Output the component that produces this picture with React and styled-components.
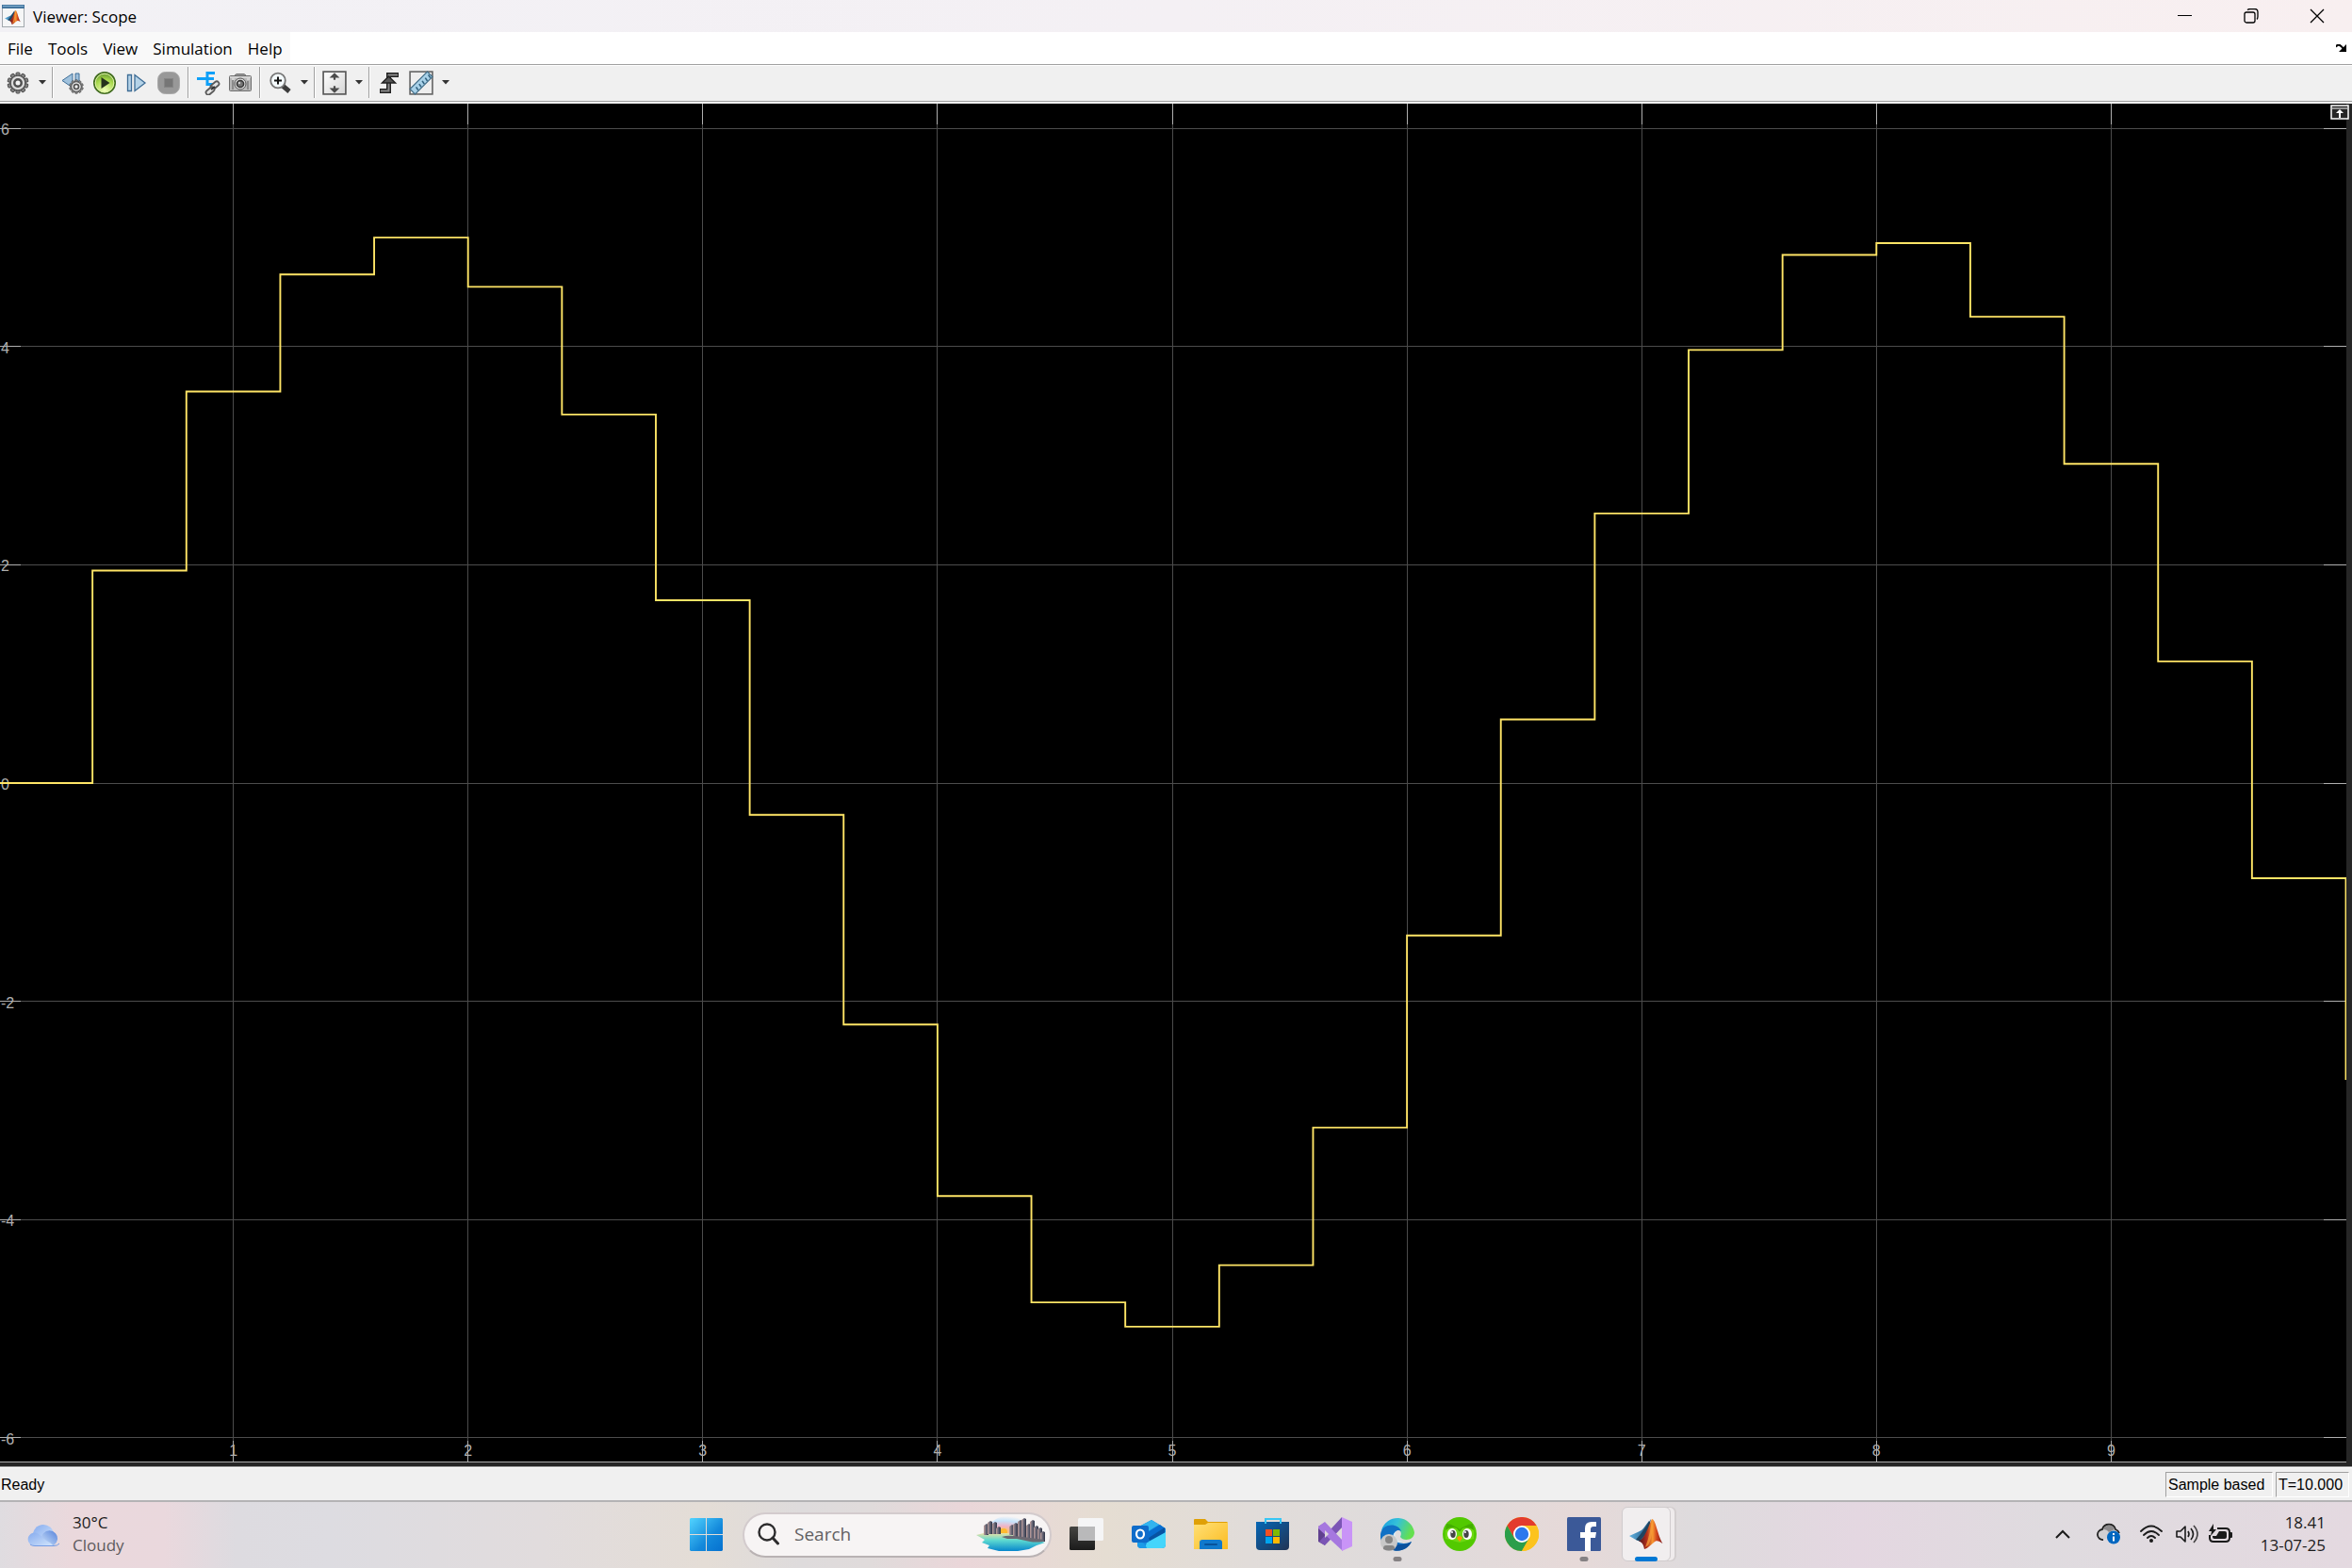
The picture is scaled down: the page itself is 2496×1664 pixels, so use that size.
import React, { useLayoutEffect, useRef, useState } from "react";
import styled, { createGlobalStyle } from "styled-components";

const Global = createGlobalStyle`
  * { box-sizing: border-box; }
  body { margin: 0; font-family: "Open Sans", "Noto Sans", sans-serif; font-size: 17px; color: #000; }
  button, input { font: inherit; color: inherit; margin: 0; }
  button { border: 0; padding: 0; background: none; display: flex; align-items: center; justify-content: center; }
  svg { display: block; flex: none; }
`;

const Desktop = styled.div`
  display: flex;
  flex-direction: column;
  height: 100vh;
  overflow: hidden;
`;

const TitleBar = styled.header`
  display: flex;
  align-items: center;
  height: 34px;
  padding: 0 2px;
  background: linear-gradient(90deg, #f2f1f5, #f4f0f4 50%, #f8eff0);
`;
const Title = styled.h1`
  flex: 1;
  margin: 0 0 0 9px;
  font-size: 17px;
  line-height: 24px;
  font-weight: 400;
  padding-top: 2px;
`;
const WindowButton = styled.button`
  width: 70px;
  height: 34px;
`;

const MenuBar = styled.nav`
  display: flex;
  justify-content: space-between;
  align-items: center;
  height: 34px;
  padding-right: 6px;
  background: #fff;
`;
const MenuList = styled.div`
  display: flex;
  gap: 16px;
  height: 34px;
  padding: 0 8px;
  background: #f9f9f9;
`;
const MenuItem = styled.button`
  line-height: 24px;
  padding-top: 2px;
`;

const ToolBar = styled.div`
  display: flex;
  align-items: center;
  height: 42px;
  padding: 0 2px 4px;
  border-top: 1px solid #a0a0a0;
  background: linear-gradient(#fff 1px, #f0f0f0 1px, #f0f0f0 38px, #a0a0a0 38px, #a0a0a0 39px, #f0f0f0 39px);
`;
const ToolButton = styled.button`
  width: 34px;
  height: 34px;
`;
const DropButton = styled.button`
  width: 16px;
  height: 34px;
  padding-left: 2px;
`;
const Separator = styled.span`
  width: 2px;
  height: 33px;
  margin: 0 3px;
  border-left: 1px solid #a0a0a0;
  border-right: 1px solid #fff;
`;

const Plot = styled.main`
  position: relative;
  flex: 1;
  min-height: 0;
  overflow: hidden;
  background: #262626;
  padding: 0 6px 4px 0;
`;
const PlotArea = styled.div`
  height: 100%;
  background: #000;
  border-bottom: 1px solid #afafaf;
  overflow: hidden;
`;
const CornerButton = styled.button`
  position: absolute;
  top: 1px;
  right: 3px;
  width: 20px;
  height: 16px;
`;

const StatusBar = styled.footer`
  display: flex;
  align-items: center;
  gap: 3px;
  height: 36px;
  padding: 2px 3px 0 1px;
  border-top: 1px solid #a0a0a0;
  background: linear-gradient(#fff 1px, #f0f0f0 1px);
  font: 16px/20px "Liberation Sans", Arial, sans-serif;
`;
const Ready = styled.span`
  flex: 1;
`;
const StatusCell = styled.span`
  height: 27px;
  width: ${(p) => p.$width}px;
  padding: 3px 2px;
  border: 1px solid;
  border-color: #a0a0a0 #fff #fff #a0a0a0;
  white-space: nowrap;
`;

const TaskBar = styled.footer`
  display: grid;
  grid-template-columns: 1fr auto 1fr;
  align-items: center;
  height: 72px;
  border-top: 2px solid #b4b3b5;
  background: linear-gradient(90deg, #dfdce0 0%, #ead8dc 3%, #ead8dd 7%, #dddbe0 10%, #dddce1 14%, #e1dcdd 23%, #e4ddd6 30%, #dedbdc 34%, #e0dbdb 37%, #ead6d9 41%, #e5ddd2 47%, #e1dcd9 53%, #dfdbdc 60%, #e6d9d8 67%, #dedbdd 72%, #e4d7e1 79%, #dfdbdf 87%, #e4d9e0 100%);
`;
const Weather = styled.button`
  justify-self: start;
  gap: 12px;
  padding-left: 29px;
  text-align: left;
  line-height: 24px;
`;
const WeatherText = styled.span`
  display: flex;
  flex-direction: column;
  padding-bottom: 2px;
  color: #1b1b1b;
`;
const Muted = styled.span`
  color: #5d5a5d;
`;
const TaskCenter = styled.div`
  display: flex;
  align-items: center;
`;
const TaskButton = styled.button`
  position: relative;
  width: 66px;
  height: 70px;
  padding-bottom: 2px;
  &::after {
    content: "";
    display: ${(p) => (p.$mark ? "block" : "none")};
    position: absolute;
    bottom: 7px;
    left: 50%;
    width: ${(p) => (p.$mark === "active" ? 24 : 9)}px;
    height: 5px;
    transform: translateX(-50%);
    border-radius: 3px;
    background: ${(p) => (p.$mark === "active" ? "#0078d4" : "#858183")};
  }
`;
const ActiveTile = styled.span`
  display: flex;
  align-items: center;
  justify-content: center;
  width: 52px;
  height: 58px;
  border: 1px solid #d0cbcd;
  border-radius: 6px;
  background: #f1eeef;
  box-shadow: 5px 0 0 -1px #efebec, 6px 0 0 0 #d3cecf;
`;
const SearchBox = styled.label`
  display: flex;
  align-items: center;
  width: 328px;
  height: 48px;
  margin: 0 4px 0 6px;
  padding: 0 4px 2px 14px;
  border: 2px solid #d3cbcd;
  border-bottom-color: #b9b2b3;
  border-radius: 24px;
  background: #f7f4f4;
`;
const SearchInput = styled.input`
  flex: 1;
  min-width: 0;
  margin-left: 15px;
  padding: 0;
  border: 0;
  outline: 0;
  background: transparent;
  font-size: 19px;
  line-height: 28px;
  &::placeholder { color: #626062; opacity: 1; }
`;
const Tray = styled.div`
  display: flex;
  align-items: center;
  justify-self: end;
  padding-right: 28px;
`;
const TrayButton = styled.button`
  width: ${(p) => p.$width || 36}px;
  height: 60px;
  padding-bottom: 2px;
`;
const Clock = styled.button`
  width: 93px;
  flex-direction: column;
  align-items: flex-end;
  line-height: 24px;
  padding-bottom: 2px;
  color: #1b1b1b;
`;

const AXIS_LIMIT = 6.225;
const STEP = 0.4;
const samples = Array.from({ length: 26 }, (_, i) => ({ t: i * STEP, v: 5 * Math.sin(i * STEP) }));

function ScopeChart() {
  const ref = useRef(null);
  const [size, setSize] = useState({ w: 2490, h: 1441 });
  useLayoutEffect(() => {
    const measure = () => {
      const box = ref.current.getBoundingClientRect();
      setSize({ w: box.width, h: box.height });
    };
    measure();
    const observer = new ResizeObserver(measure);
    observer.observe(ref.current);
    return () => observer.disconnect();
  }, []);
  const { w, h } = size;
  const x = (t) => (t * (w + 1)) / 10 - 1.5;
  const y = (v) => h * (0.5 - v / (2 * AXIS_LIMIT));
  const path = samples
    .map((s, i) => (i ? `H${x(s.t)}V${y(s.v)}` : `M${x(0)} ${y(0)}`))
    .join("");
  const times = [1, 2, 3, 4, 5, 6, 7, 8, 9];
  const values = [6, 4, 2, 0, -2, -4, -6];
  return (
    <PlotArea ref={ref}>
      <svg width={w} height={h} role="img" aria-label="Sampled sine wave">
        <g shapeRendering="crispEdges">
          {times.map((t) => (
            <g key={t}>
              <line x1={x(t)} x2={x(t)} y1="0" y2={h} stroke="#4c4c4c" />
              <line x1={x(t)} x2={x(t)} y1="0" y2="22" stroke="#afafaf" />
              <line x1={x(t)} x2={x(t)} y1={h - 23} y2={h} stroke="#afafaf" />
            </g>
          ))}
          {values.map((v) => (
            <g key={v}>
              <line x1="0" x2={w} y1={y(v)} y2={y(v)} stroke="#4c4c4c" />
              <line x1="0" x2="22" y1={y(v)} y2={y(v)} stroke="#afafaf" />
              <line x1={w - 24} x2={w} y1={y(v)} y2={y(v)} stroke="#afafaf" />
            </g>
          ))}
        </g>
        <g fill="#afafaf" fontFamily="Liberation Sans, Arial, sans-serif" fontSize="16">
          {times.map((t) => (
            <text key={t} x={x(t)} y={h - 7} textAnchor="middle">{t}</text>
          ))}
          {values.map((v) => (
            <text key={v} x="1" y={y(v) + 7}>{v}</text>
          ))}
        </g>
        <path d={path} fill="none" stroke="#ffe566" strokeWidth="1.9" />
      </svg>
    </PlotArea>
  );
}

function MatlabIcon({ size }) {
  return (
    <svg width={size} height={size} viewBox="0 0 36 36">
      <defs>
        <linearGradient id="mlBlue" x1="0" x2="1"><stop offset="0" stopColor="#63b3e0" /><stop offset="1" stopColor="#174a77" /></linearGradient>
        <linearGradient id="mlFire" x1="0" x2="1"><stop offset="0" stopColor="#4a1320" /><stop offset=".35" stopColor="#b4301b" /><stop offset=".58" stopColor="#f89a32" /><stop offset=".75" stopColor="#d2451e" /><stop offset="1" stopColor="#7b1415" /></linearGradient>
      </defs>
      <path d="M0 20 10 15.500q3-1 5-3.500L21 4l2 4-6 13-6 4.500-4-1.500z" fill="url(#mlBlue)" />
      <path d="m7 24 5-6 6-8 5-8-3 13-9 10.500z" fill="#20445f" />
      <path d="M24 2c4 0 6 17 11.500 26-4-3-7-4-9.500-1-4 3-6 6-10 7-1-5-2-7-6-8.500 6-2 10-15 14-23.500z" fill="url(#mlFire)" />
      <path d="M24 2c-1 9-3 20-7 30l3-2c4-8 6-18 4-28z" fill="#f9a33b" opacity=".7" />
    </svg>
  );
}

const WindowIcon = () => (
  <svg width="24" height="24" viewBox="0 0 24 24">
    <rect x=".5" y=".5" width="23" height="23" fill="#f5f6f7" stroke="#a2a8ad" />
    <path d="M0 0h24v4H0z" fill="#44749d" /><path d="M1 1h22v1H1z" fill="#83b0d2" />
    <svg x="3" y="5" width="18" height="17"><MatlabIcon size={17} /></svg>
  </svg>
);

const gearTeeth = Array.from({ length: 10 }, (_, i) => i * 36);
const Gear = ({ size = 24 }) => (
  <svg width={size} height={size} viewBox="0 0 24 24">
    {gearTeeth.map((a) => (
      <rect key={a} x="10" y="1" width="4" height="5" rx="1" fill="#888" stroke="#4c4c4c" transform={`rotate(${a} 12 12)`} />
    ))}
    <circle cx="12" cy="12" r="8" fill="#c9c9c9" stroke="#555" strokeWidth="1.500" />
    <circle cx="12" cy="12" r="6" fill="none" stroke="#dedede" strokeWidth="1.500" />
    <circle cx="12" cy="12" r="3.700" fill="#f3f3f3" stroke="#4f4f4f" strokeWidth="2.400" />
  </svg>
);
const Caret = () => <svg width="8" height="5" viewBox="0 0 8 5"><path d="M0 0h8L4 4.500z" fill="#333" /></svg>;

const StepBack = () => (
  <svg width="24" height="24" viewBox="0 0 24 24">
    <path d="M12 2v15L1 9.500z" fill="#9fc1dc" stroke="#3f6f98" />
    <path d="M15 2h4v14h-4z" fill="#9fc1dc" stroke="#3f6f98" />
    <svg x="8" y="8" width="16" height="16"><Gear size={16} /></svg>
  </svg>
);
const Run = () => (
  <svg width="26" height="26" viewBox="0 0 26 26">
    <defs><radialGradient id="runG" cx=".5" cy=".85" r=".85"><stop offset="0" stopColor="#f1ffba" /><stop offset=".6" stopColor="#a8d94c" /><stop offset="1" stopColor="#5b8e2d" /></radialGradient></defs>
    <circle cx="13" cy="13" r="11.200" fill="url(#runG)" stroke="#416b20" strokeWidth="1.600" />
    <circle cx="13" cy="13" r="9.800" fill="none" stroke="#dff3a8" />
    <path d="M9.500 7v12l9-6z" fill="#26331c" />
  </svg>
);
const StepForward = () => (
  <svg width="22" height="22" viewBox="0 0 22 22" fill="#b5d3e8" stroke="#3d6c95" strokeWidth="1.300">
    <path d="M1.500 2.500h4v17h-4z" /><path d="m9 2.500 11 8.500-11 8.500z" />
  </svg>
);
const Stop = () => (
  <svg width="24" height="24" viewBox="0 0 24 24">
    <rect x=".5" y=".5" width="23" height="23" rx="8" fill="#989898" stroke="#aaa" />
    <rect x="7.500" y="7.500" width="9" height="9" fill="#767676" stroke="#858585" />
  </svg>
);
const SignalLink = () => (
  <svg width="26" height="26" viewBox="0 0 26 26" fill="none">
    <path d="M1 8.500h10M20 2.500h-8v12h7M12 8.500h7" stroke="#0fa0f8" strokeWidth="3" />
    <g stroke="#5a5a5a" strokeWidth="1.800" fill="#e4e4e4"><rect x="15" y="13" width="10" height="5" rx="2.500" transform="rotate(-40 20 15.500)" /><rect x="10" y="19" width="10" height="5" rx="2.500" transform="rotate(-40 15 21.500)" /></g>
    <path d="m16 20 4-3" stroke="#333" strokeWidth="2" />
  </svg>
);
const Camera = () => (
  <svg width="24" height="20" viewBox="0 0 24 20">
    <path d="M6 2 8 .5h8L18 2z" fill="#bbb" stroke="#777" />
    <rect x=".5" y="2.500" width="23" height="16" rx="1" fill="#b8b8b8" stroke="#6d6d6d" />
    <path d="M1 4h22M3 6h3M19 6h3" stroke="#eee" />
    <path d="M4 7v10M20 8v9" stroke="#8b8b8b" strokeWidth="2" />
    <circle cx="12" cy="11" r="6" fill="#ddd" stroke="#555" /><circle cx="12" cy="11" r="3.600" fill="#777" stroke="#333" strokeWidth="1.500" />
    <circle cx="11" cy="10" r="1.200" fill="#ccc" />
  </svg>
);
const ZoomIn = () => (
  <svg width="24" height="24" viewBox="0 0 24 24">
    <path d="m15 15 7 6" stroke="#3c3c3c" strokeWidth="5" />
    <circle cx="10" cy="9.500" r="7.800" fill="#f4fafc" stroke="#777" strokeWidth="1.800" />
    <path d="M6 9.500h8M10 5.500v8" stroke="#111" strokeWidth="2" />
  </svg>
);
const FitView = () => (
  <svg width="26" height="26" viewBox="0 0 24 24">
    <defs><linearGradient id="fitG" x2="1" y2="1"><stop offset="0" stopColor="#fff" /><stop offset="1" stopColor="#d5d5d5" /></linearGradient></defs>
    <rect x="1" y="1" width="22" height="22" fill="url(#fitG)" stroke="#555" strokeWidth="1.500" />
    <path d="m12 2 5 5h-4v2h-2V7H7zM12 22l5-5h-4v-2h-2v2H7z" fill="#4b4b4b" />
  </svg>
);
const Trigger = () => (
  <svg width="22" height="24" viewBox="0 0 22 24">
    <path d="M1 20.500h9.500V3.500H21" fill="none" stroke="#222" strokeWidth="5" />
    <path d="M2 20.500h8.500V3.500H20" fill="none" stroke="#888" strokeWidth="2" />
    <path d="m10.500 5 7 7h-14z" fill="#555" stroke="#222" strokeWidth="1.500" />
  </svg>
);
const Ruler = () => (
  <svg width="26" height="26" viewBox="0 0 24 24">
    <rect x="1" y="1" width="22" height="22" fill="#eee" stroke="#666" strokeWidth="1.500" />
    <path d="M1 18 18 1l5 5L6 23z" fill="#a8d1e8" stroke="#416d88" />
    <path d="m9 19-2-3m5 0-2-3m5 0-2-3m5 0-2-3m5 0-2-3" stroke="#31617e" strokeWidth="1.500" />
  </svg>
);

const Cloud = () => (
  <svg width="36" height="24" viewBox="0 0 36 24">
    <defs><linearGradient id="cl" x2="1" y2="1"><stop offset="0" stopColor="#86abee" /><stop offset="1" stopColor="#d2e5fc" /></linearGradient><linearGradient id="cr" x1="1" x2="0" y2="1"><stop offset="0" stopColor="#5682da" /><stop offset="1" stopColor="#cfe4fb" /></linearGradient></defs>
    <path d="M6 13a11 11 0 0 1 22-2v9H8z" fill="url(#cl)" />
    <path d="M19 23a8.500 8.500 0 1 1 9 0z" fill="url(#cr)" />
    <path d="M7 23.500A7 7 0 1 1 13 12c3 1 3 3 6 5 4 3 6 3 8 6z" fill="url(#cl)" />
    <path d="M3 22q2 1.500 5 1.500h20q4 0 6-2.500" fill="none" stroke="#739be4" />
  </svg>
);
const Start = () => (
  <svg width="35" height="35" viewBox="0 0 35 35">
    <defs><linearGradient id="st" gradientUnits="userSpaceOnUse" x1="0" y1="0" x2="35" y2="35"><stop offset="0" stopColor="#52d4ff" /><stop offset=".6" stopColor="#1389db" /><stop offset="1" stopColor="#0671cf" /></linearGradient></defs>
    <path d="M1 0h16v17H0V1zM18 0h16l1 1v16H18zM0 18h17v17H1l-1-1zM18 18h17v16l-1 1H18z" fill="url(#st)" />
  </svg>
);
const SearchIcon = () => (
  <svg width="24" height="24" viewBox="0 0 24 24" fill="none" stroke="#2d2c2d"><circle cx="10" cy="10" r="8.500" strokeWidth="2.400" /><path d="m16 16 5.500 6" strokeWidth="3" strokeLinecap="round" /></svg>
);
const towers = [[8, 8, 11], [12, 5, 13], [17, 6, 12], [21, 11, 7], [35, 9, 10], [39, 7, 15], [44, 4, 18], [48, 2, 21], [53, 8, 16], [57, 4, 21], [61, 10, 14], [65, 12, 14], [68, 16, 10]];
const CityArt = () => (
  <svg width="74" height="38" viewBox="0 0 74 38">
    <defs>
      <linearGradient id="sea" y2="1" x2="0"><stop offset="0" stopColor="#e9e0a5" /><stop offset=".4" stopColor="#5dd9d0" /><stop offset="1" stopColor="#0787cc" /></linearGradient>
      <radialGradient id="sky" cx=".4" cy=".9" r=".9"><stop offset="0" stopColor="#ffc45a" /><stop offset=".35" stopColor="#efb4c8" /><stop offset=".7" stopColor="#c5e3fb" /><stop offset="1" stopColor="#f7f4f4" /></radialGradient>
      <linearGradient id="tower"><stop offset="0" stopColor="#c2a09c" /><stop offset=".4" stopColor="#75717f" /><stop offset="1" stopColor="#2c3346" /></linearGradient>
    </defs>
    <path d="M12 18C14 5 22 0 34 0s20 7 20 18z" fill="url(#sky)" />
    <circle cx="29" cy="17" r="4" fill="#ffb92e" />
    <path d="M0 20 8 18h40l25 6-3 3 3 1-9 3-8 4-12 2H24l-12-3 2-3-8-3 3-3z" fill="url(#sea)" />
    {towers.map(([tx, ty, th]) => <path key={tx} d={`M${tx} ${ty + 2}l3-2 2 1v${th}h-5z`} fill="url(#tower)" />)}
    <path d="M27 22q6-2 13-1l10 1 22 3-1 2q-8 1-14 0l-14-3-10 0z" fill="#6b6871" />
  </svg>
);
const TaskView = () => (
  <svg width="36" height="36" viewBox="0 0 36 36">
    <defs><linearGradient id="tv" y2="1" x2="0"><stop offset="0" stopColor="#454542" /><stop offset="1" stopColor="#1b1b1b" /></linearGradient></defs>
    <rect y="10" width="27" height="25" rx="1.500" fill="url(#tv)" /><rect x="9" y="1" width="27" height="24" rx="1.500" fill="#f5f5f6" /><path d="M9 10h18v15H9z" fill="#b9b9ba" />
  </svg>
);
const Outlook = () => (
  <svg width="36" height="36" viewBox="0 0 36 36">
    <path d="M6 11 21 3l15 9v17q0 4-4 4H10q-4 0-4-4z" fill="#168ade" /><path d="M8 10 21 3l8 5-18 11z" fill="#32b4ef" /><path d="m17 16 13-8 5 4-16 12z" fill="#086ed0" /><path d="m18 22 17-11v7L19 28z" fill="#0753a3" />
    <path d="m16 27 20-11v13q0 4-4 4H14z" fill="#45d5fb" /><path d="M6 26q8 0 10 7h-6q-4 0-4-4z" fill="#1b9be8" />
    <rect y="9" width="18" height="18" rx="2" fill="#0f6cca" /><ellipse cx="9" cy="18" rx="4" ry="4.500" fill="none" stroke="#fff" strokeWidth="2.200" />
  </svg>
);
const Folder = () => (
  <svg width="36" height="36" viewBox="0 0 36 36">
    <defs><linearGradient id="fo" x2="1" y2="1"><stop offset="0" stopColor="#ffe076" /><stop offset="1" stopColor="#fbbb20" /></linearGradient></defs>
    <path d="M0 3q0-1 1-1h11l3 3h20l1 1v5H0z" fill="#dfa006" /><path d="M0 8h12l3-2h21v28H0z" fill="url(#fo)" /><path d="M6 34V27q0-3 3-3h18q3 0 3 3v7z" fill="#1079cc" /><path d="M12 29h12" stroke="#07529a" strokeWidth="2" strokeLinecap="round" />
  </svg>
);
const Store = () => (
  <svg width="36" height="36" viewBox="0 0 36 36">
    <defs><linearGradient id="so" x2="1" y2="1"><stop offset="0" stopColor="#0667b5" /><stop offset="1" stopColor="#213354" /></linearGradient></defs>
    <path d="M0 5h35v26q0 4-4 4H4q-4 0-4-4z" fill="url(#so)" /><path d="M10 7V2h16v5" fill="none" stroke="#38c6f4" strokeWidth="2" />
    <path d="M10 13h7v7h-7z" fill="#f25022" /><path d="M18 13h7v7h-7z" fill="#7fba00" /><path d="M10 21h7v7h-7z" fill="#00a4ef" /><path d="M18 21h7v7h-7z" fill="#ffb900" />
  </svg>
);
const VisualStudio = () => (
  <svg width="36" height="36" viewBox="0 0 36 36">
    <path d="m0 10 7-4v24l-7-4z" fill="#60408f" /><path d="m7 30-6-4L25 0l1 10z" fill="#7b55b5" /><path d="m0 10 7-5 19 20v11L0 12z" fill="#a678df" /><path d="M25 0 36 5v26l-11 5z" fill="#c994f7" /><path d="m7 14 4 4-4 4z" fill="#ded9da" />
  </svg>
);
const Edge = () => (
  <svg width="36" height="36" viewBox="0 0 36 36">
    <defs><linearGradient id="ed" x2="1" y2=".3"><stop offset="0" stopColor="#159ce2" /><stop offset=".5" stopColor="#35c1d8" /><stop offset="1" stopColor="#64e04f" /></linearGradient></defs>
    <path d="M1 14A18 18 0 0 1 36 16c0 9-12 10-15 5 4-7-5-13-20-7z" fill="url(#ed)" />
    <path d="M0 18C2 6 19 6 22 15c-5-3-9 2-7 7 2 7 12 7 18 4-4 8-12 11-20 9C4 33-1 26 0 18z" fill="#1171c5" />
    <path d="M11 17c-3 14 13 14 22 9-4 9-15 12-22 8-5-5-3-13 0-17z" fill="#0b509c" />
    <path d="M17 15c-3 4-1 10 7 11l-5 1c-6-2-8-9-2-12z" fill="#d8eaf3" />
    <circle cx="9" cy="27" r="9" fill="#c8c8c8" /><circle cx="9" cy="24" r="4" fill="#858585" /><path d="M3 34v-1q0-3 3-3h6q3 0 3 3v1q-6 3-12 0z" fill="#858585" />
  </svg>
);
const Duolingo = () => (
  <svg width="36" height="36" viewBox="0 0 36 36">
    <circle cx="18" cy="18" r="18" fill="#52c900" /><path d="M4 7q5 0 9 3 3 1 5 3 2-2 5-3 4-3 9-3l1 8H3z" fill="#43ad00" /><path d="M3 14q6-5 12-2l3 4 3-4q6-3 12 2v9l-15 4-15-4z" fill="#6ed812" />
    <ellipse cx="10" cy="18" rx="5" ry="6" fill="#fff" /><ellipse cx="26" cy="18" rx="5" ry="6" fill="#fff" /><ellipse cx="11" cy="18" rx="2.700" ry="4" fill="#454545" /><ellipse cx="25" cy="18" rx="2.700" ry="4" fill="#454545" /><circle cx="10" cy="16" r="1" fill="#fff" /><circle cx="24" cy="16" r="1" fill="#fff" /><path d="M15 22q3-4 6 0l-3 4z" fill="#ff9800" />
  </svg>
);
const Chrome = () => (
  <svg width="36" height="36" viewBox="0 0 36 36">
    <circle cx="18" cy="18" r="18" fill="#fcc31e" /><path d="M2.400 9A18 18 0 0 1 33.600 9H18l-7.800 13.500z" fill="#e33b2e" /><path d="M2.400 9A18 18 0 0 0 18 36l7.800-13.500H10.200z" fill="#2b9e4b" /><path d="M18 9h15.600A18 18 0 0 1 18 36l7.800-13.500z" fill="#fcc31e" /><circle cx="18" cy="18" r="9" fill="#fff" /><circle cx="18" cy="18" r="7.200" fill="#2b78ed" />
  </svg>
);
const Facebook = () => (
  <svg width="36" height="36" viewBox="0 0 36 36"><rect width="36" height="36" rx="1.500" fill="#3b5998" /><path d="M19 36V22h-5v-6h5v-4q0-7 7-7h5v5h-3q-3 0-3 3v3h6l-1 6h-5v14z" fill="#fff" /></svg>
);
const OneDrive = () => (
  <svg width="26" height="24" viewBox="0 0 26 24">
    <path d="M7 18a5.500 5.500 0 0 1-1-11c2-7 12-7 14 0q3 1 4 4" fill="#d2cfd1" stroke="#222" strokeWidth="1.800" /><path d="M7 7c2-6 11-6 12 0l-6 3q-2-3-6-3z" fill="#8c8a8c" /><circle cx="18" cy="15.500" r="7" fill="#0067c0" /><path d="M18 11v2m0 1.500v5" stroke="#fff" strokeWidth="2" />
  </svg>
);
const Wifi = () => (
  <svg width="26" height="20" viewBox="0 0 26 20" fill="none" stroke="#1b1b1b" strokeWidth="1.800" strokeLinecap="round"><path d="M2 7q11-11 22 0M5 11q8-8 16 0M9 14q4-4 8 0" /><circle cx="13" cy="17" r="2" fill="#1b1b1b" stroke="none" /></svg>
);
const Sound = () => (
  <svg width="26" height="22" viewBox="0 0 26 22" fill="none" stroke="#1b1b1b" strokeWidth="1.600" strokeLinejoin="round"><path d="M2 8h4l5-5v16l-5-5H2zM14 8q2 3 0 6M17 5q5 6 0 12" /><path d="M20 2q8 9 0 18" opacity=".8" /></svg>
);
const Battery = () => (
  <svg width="26" height="22" viewBox="0 0 26 22">
    <path d="M9 5h9q4 0 4 4v6q0 4-4 4H5q-4 0-4-4v-3" fill="none" stroke="#1b1b1b" strokeWidth="2" />
    <path d="M11 8h6q2 0 2 2v4q0 2-2 2H6q-2 0-2-2v-1h4zM23 9h1q1 0 1 1v4q0 1-1 1h-1z" fill="#1b1b1b" />
    <path d="M5 0 0 8h3l-1 5 6-7H5z" fill="#1b1b1b" />
  </svg>
);

const tasks = [
  ["Task view", TaskView], ["Outlook", Outlook], ["File Explorer", Folder], ["Store", Store], ["Visual Studio", VisualStudio],
  ["Edge", Edge, "open"], ["Duolingo", Duolingo], ["Chrome", Chrome], ["Facebook", Facebook, "open"],
];

const tools = [
  ["Configuration", Gear], "drop", "sep",
  ["Step back", StepBack], ["Run", Run], ["Step forward", StepForward], ["Stop", Stop], "sep",
  ["Highlight block", SignalLink], ["Snapshot", Camera], "sep",
  ["Zoom", ZoomIn], "drop", "sep",
  ["Scale axes", FitView], "drop", "sep",
  ["Triggers", Trigger], ["Measurements", Ruler], "drop",
];

export default function App() {
  return (
    <Desktop>
      <Global />
      <TitleBar>
        <WindowIcon />
        <Title>Viewer: Scope</Title>
        <WindowButton aria-label="Minimize"><svg width="16" height="16"><path d="M0 7.500h15" stroke="#000" /></svg></WindowButton>
        <WindowButton aria-label="Restore">
          <svg width="16" height="16" viewBox="0 0 16 16" fill="none" stroke="#000" strokeWidth="1.300"><rect x="1" y="4" width="11" height="11" rx="2" /><path d="M4 1.500q1-1 3-1h5q3 0 3 3v5q0 2-1 3" /></svg>
        </WindowButton>
        <WindowButton aria-label="Close"><svg width="16" height="16"><path d="m1 1 14 14M15 1 1 15" stroke="#000" strokeWidth="1.300" /></svg></WindowButton>
      </TitleBar>
      <MenuBar>
        <MenuList>
          {["File", "Tools", "View", "Simulation", "Help"].map((m) => <MenuItem key={m}>{m}</MenuItem>)}
        </MenuList>
        <button aria-label="Dock">
          <svg width="11" height="9" viewBox="0 0 11 9"><path d="M0 3q1-3 4-2 2 1 4 4" fill="none" stroke="#000" strokeWidth="2" /><path d="M11 0v8H3z" fill="#000" /></svg>
        </button>
      </MenuBar>
      <ToolBar role="toolbar">
        {tools.map((item, i) => {
          if (item === "sep") return <Separator key={i} />;
          if (item === "drop") return <DropButton key={i} aria-label="More options"><Caret /></DropButton>;
          const [label, Icon] = item;
          return <ToolButton key={i} aria-label={label}><Icon /></ToolButton>;
        })}
      </ToolBar>
      <Plot>
        <ScopeChart />
        <CornerButton aria-label="Maximize axes">
          <svg width="20" height="16" viewBox="0 0 20 16"><rect x="1" y="1" width="18" height="14" fill="#262626" stroke="#fff" strokeWidth="1.500" /><path d="M2 4h16" stroke="#fff" /><path d="m10 5 4 4h-3v5H9V9H6z" fill="#fff" /></svg>
        </CornerButton>
      </Plot>
      <StatusBar>
        <Ready>Ready</Ready>
        <StatusCell $width={114}>Sample based</StatusCell>
        <StatusCell $width={78}>T=10.000</StatusCell>
      </StatusBar>
      <TaskBar>
        <Weather>
          <Cloud />
          <WeatherText><span>30°C</span><Muted>Cloudy</Muted></WeatherText>
        </Weather>
        <TaskCenter>
          <TaskButton aria-label="Start"><Start /></TaskButton>
          <SearchBox>
            <SearchIcon />
            <SearchInput placeholder="Search" aria-label="Search" />
            <CityArt />
          </SearchBox>
          {tasks.map(([label, Icon, mark]) => (
            <TaskButton key={label} aria-label={label} $mark={mark}><Icon /></TaskButton>
          ))}
          <TaskButton aria-label="MATLAB" $mark="active"><ActiveTile><MatlabIcon size={36} /></ActiveTile></TaskButton>
        </TaskCenter>
        <Tray>
          <TrayButton $width={48} aria-label="Show hidden icons"><svg width="18" height="10"><path d="m2 9 7-7 7 7" fill="none" stroke="#1b1b1b" strokeWidth="2" /></svg></TrayButton>
          <TrayButton $width={50} aria-label="OneDrive"><OneDrive /></TrayButton>
          <TrayButton $width={40} aria-label="Network"><Wifi /></TrayButton>
          <TrayButton aria-label="Volume"><Sound /></TrayButton>
          <TrayButton aria-label="Battery"><Battery /></TrayButton>
          <Clock><span>18.41</span><span>13-07-25</span></Clock>
        </Tray>
      </TaskBar>
    </Desktop>
  );
}
